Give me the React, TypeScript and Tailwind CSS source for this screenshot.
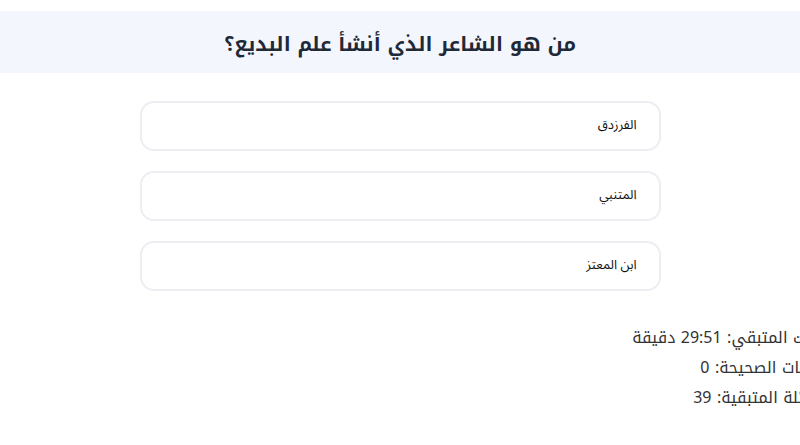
const options = ["الفرزدق", "المتنبي", "ابن المعتز"];

const stats = [
  "الوقت المتبقي: 29:51 دقيقة",
  "الإجابات الصحيحة: 0",
  "الأسئلة المتبقية: 39",
];

export default function App() {
  return (
    <div dir="rtl" className="min-h-screen w-[800px] overflow-hidden bg-white pt-[11px] text-[#1f2937]">
      {/* Question header */}
      <header className="flex h-[62px] items-center justify-center bg-[#f3f6fd]">
        <h1 className="mt-[3px] font-['Noto_Kufi_Arabic',sans-serif] text-[20px] font-bold text-[#1f2937]">
          من هو الشاعر الذي أنشأ علم البديع؟
        </h1>
      </header>

      {/* Answer options */}
      <main className="mx-auto mt-[28px] flex w-[521px] flex-col gap-[20px]">
        {options.map((opt) => (
          <button
            key={opt}
            className="flex h-[50px] w-full items-center rounded-[14px] border-2 border-[#eceef2] bg-white px-[22px] text-right font-['Noto_Sans_Arabic',sans-serif] text-[13px] text-[#111]"
          >
            {opt}
          </button>
        ))}
      </main>

      {/* Stats */}
      <section className="-mr-[34px] mt-[36px] flex flex-col gap-[8px] font-['Noto_Kufi_Arabic','Open_Sans',sans-serif] text-[16px] text-[#333]">
        {stats.map((s) => (
          <p key={s} className="leading-[22px]">{s}</p>
        ))}
      </section>
    </div>
  );
}
